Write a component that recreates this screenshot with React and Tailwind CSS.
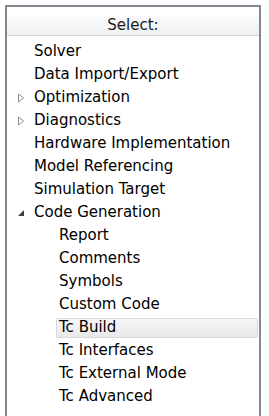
import React from "react"

const items = [
  { label: "Solver", level: 0 },
  { label: "Data Import/Export", level: 0 },
  { label: "Optimization", level: 0, toggle: "closed" },
  { label: "Diagnostics", level: 0, toggle: "closed" },
  { label: "Hardware Implementation", level: 0 },
  { label: "Model Referencing", level: 0 },
  { label: "Simulation Target", level: 0 },
  { label: "Code Generation", level: 0, toggle: "open" },
  { label: "Report", level: 1 },
  { label: "Comments", level: 1 },
  { label: "Symbols", level: 1 },
  { label: "Custom Code", level: 1 },
  { label: "Tc Build", level: 1, selected: true },
  { label: "Tc Interfaces", level: 1 },
  { label: "Tc External Mode", level: 1 },
  { label: "Tc Advanced", level: 1 },
]

function Toggle({ state }) {
  if (state === "closed") {
    return (
      <svg width="8" height="10" viewBox="0 0 8 10" className="shrink-0">
        <path d="M1.5 1 L6.5 5 L1.5 9 Z" fill="white" stroke="#8c8c8c" strokeWidth="1" />
      </svg>
    )
  }
  return (
    <svg width="8" height="8" viewBox="0 0 8 8" className="shrink-0">
      <path d="M7 1 L7 7 L1 7 Z" fill="#404040" />
    </svg>
  )
}

export default function App() {
  return (
    <div className="w-[269px] h-[416px] bg-white pt-[5px] pl-[5px] pr-[8px] overflow-hidden">
      <div
        className="h-[411px] border-l-2 border-r-2 border-t-2 border-[#828790] bg-white pt-[9px]"
        style={{ fontFamily: '"DejaVu Sans", "Noto Sans", sans-serif' }}
      >
        <div className="h-[20px] bg-gradient-to-b from-[#fafbfc] to-[#eef0f2] border-b border-[#d5d5d5] flex items-center justify-center text-[15px] text-[#1a1a1a]">
          Select:
        </div>
        <div className="pt-[4px] pr-[1px]">
          {items.map((it) => (
            <div key={it.label} className="h-[23px] flex items-center">
              <div className={it.level === 0 ? "w-[24px] pl-[10px] flex items-center" : "w-[49px]"}>
                {it.level === 0 && it.toggle ? <Toggle state={it.toggle} /> : null}
              </div>
              <div
                className={
                  it.selected
                    ? "flex-1 h-[20px] flex items-center pl-[2px] rounded-[2px] border border-[#d9d9d9] bg-gradient-to-b from-[#f7f7f7] to-[#e9e9e9] text-[15px] text-black"
                    : "flex-1 pl-[3px] text-[15px] text-black"
                }
              >
                {it.label}
              </div>
            </div>
          ))}
        </div>
      </div>
    </div>
  )
}
